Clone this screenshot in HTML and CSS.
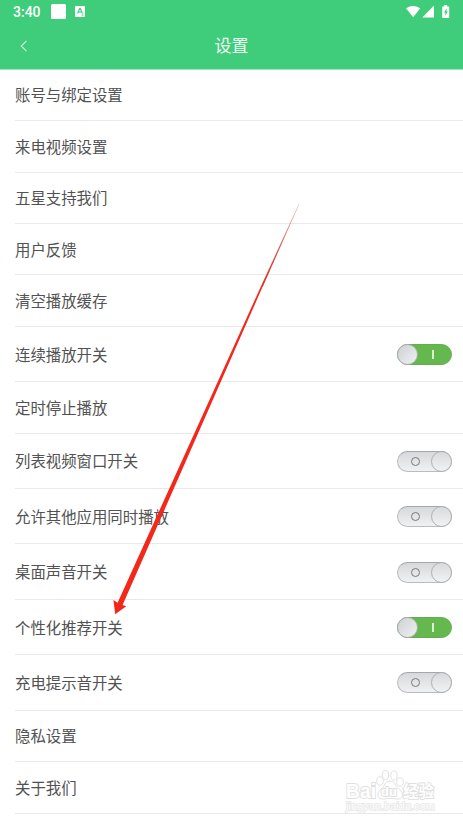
FILE: index.html
```html
<!DOCTYPE html>
<html lang="zh-CN">
<head>
<meta charset="utf-8">
<title>设置</title>
<link rel="stylesheet" href="styles.css">
</head>
<body>
<header class="header">
  <div class="status">
    <span class="time">3:40</span>
    <span class="square"></span>
    <svg class="keyboard" width="10" height="11" viewBox="0 0 10 11"><rect width="10" height="11" rx="1" fill="#fff"/><path d="M2.5 7.5 4.7 2.5h.6l2.2 5M3.3 6h3.4M6.5 9h2" fill="none" stroke="#3fcc7b" stroke-width="1.1"/></svg>
    <svg class="signals" width="44" height="14" viewBox="0 0 44 14"><path d="M0 3.2Q7-1.2 14.3 3.2L7.2 12.2ZM28 .6v11.9H16.3ZM36.2 1.4h2V0h3v1.4h2V13h-7Z" fill="#fff"/><path d="M40.7 3.2 38 7.4h1.4v3.4l2.4-4.3h-1.4Z" fill="#3fcc7b"/></svg>
  </div>
  <div class="bar">
    <svg class="back" width="8" height="12" viewBox="0 0 8 12"><path d="M6.5.8 1.2 6l5.3 5.2" fill="none" stroke="#c9f4d9" stroke-width="1.1"/></svg>
    <h1 class="title">设置</h1>
  </div>
</header>
<main class="list">
  <div class="row">账号与绑定设置</div>
  <div class="row">来电视频设置</div>
  <div class="row">五星支持我们</div>
  <div class="row">用户反馈</div>
  <div class="row">清空播放缓存</div>
  <div class="row tall">连续播放开关<span class="switch on"><i class="mark"></i><i class="knob"></i></span></div>
  <div class="row">定时停止播放</div>
  <div class="row tall">列表视频窗口开关<span class="switch"><i class="mark"></i><i class="knob"></i></span></div>
  <div class="row tall">允许其他应用同时播放<span class="switch"><i class="mark"></i><i class="knob"></i></span></div>
  <div class="row tall">桌面声音开关<span class="switch"><i class="mark"></i><i class="knob"></i></span></div>
  <div class="row tall">个性化推荐开关<span class="switch on"><i class="mark"></i><i class="knob"></i></span></div>
  <div class="row tall">充电提示音开关<span class="switch"><i class="mark"></i><i class="knob"></i></span></div>
  <div class="row">隐私设置</div>
  <div class="row">关于我们</div>
</main>
<svg class="arrow" width="463" height="824" viewBox="0 0 463 824">
  <defs><linearGradient id="fade" gradientUnits="userSpaceOnUse" x1="299" y1="204" x2="262" y2="286"><stop offset="0" stop-color="#e0a0a0" stop-opacity=".8"/><stop offset=".5" stop-color="#d65b50"/><stop offset="1" stop-color="#d9301f"/></linearGradient></defs>
  <path d="M298.8 204 299.2 204.2 262.9 286.6 261.1 286Z" fill="url(#fade)"/>
  <path d="M262.9 286 122.6 605 126.3 606.2 115.2 614.2 113.4 600 117.6 602.7 261.1 286Z" fill="#f3281a"/>
</svg>
<svg class="watermark" width="100" height="50" viewBox="0 0 100 50">
  <g fill="#fff" stroke="#e2e2e2" stroke-width="1">
    <ellipse cx="40" cy="14" rx="3.3" ry="4.2"/>
    <ellipse cx="45.5" cy="8" rx="3.2" ry="4.6"/>
    <ellipse cx="54" cy="8.5" rx="3.2" ry="4.6"/>
    <ellipse cx="60" cy="15" rx="3.3" ry="4.2"/>
    <path d="M50 14c-5 0-5 5-9 8-6 5-3 11 3 10 4-.8 8-.8 12 0 7 1 9-5 3-10-4-3-4-8-9-8Z"/>
  </g>
  <g class="wm-text">
    <text class="wm-brand" x="6" y="31" textLength="30" lengthAdjust="spacingAndGlyphs">Bai</text>
    <text class="wm-du" x="41" y="29">du</text>
    <text class="wm-cn" x="63" y="30" textLength="31" lengthAdjust="spacingAndGlyphs">经验</text>
    <text class="wm-url" x="6" y="43" textLength="89" lengthAdjust="spacingAndGlyphs">jingyan.baidu.com</text>
  </g>
</svg>
</body>
</html>
```

FILE: styles.css
```css
* { box-sizing: border-box; }
body {
  margin: 0;
  position: relative;
  height: 824px;
  overflow: hidden;
  background: #fff;
  color: #525252;
  font-family: "Noto Sans CJK SC", sans-serif;
}
.header {
  height: 69.7px;
  background: #3fcc7b;
  border-bottom: 1px solid #9ee8bd;
  color: #fff;
}
.status {
  display: flex;
  align-items: center;
  height: 23px;
  padding: 0 13px;
}
.time {
  width: 38px;
  font: 500 14px/24px Roboto, sans-serif;
}
.square {
  width: 15px;
  height: 15px;
  border-radius: 1.5px;
  background: #fff;
}
.keyboard { margin-left: 9px; }
.signals { margin-left: auto; }
.bar {
  display: grid;
  grid-template-columns: 48px 1fr 48px;
  align-items: center;
  height: 46px;
}
.back { margin-left: 20px; }
.title {
  margin: 0;
  padding-bottom: 2px;
  color: #effcf4;
  font-size: 17px;
  line-height: 24px;
  font-weight: 400;
  text-align: center;
}
.row {
  display: flex;
  align-items: center;
  justify-content: space-between;
  height: 51.45px;
  margin-left: 15px;
  padding: 0 11px 1px 0;
  border-bottom: 1px solid #e9e9e9;
  font-size: 15.4px;
  line-height: 22px;
}
.tall { height: 55.4px; }
.switch {
  position: relative;
  top: 1px;
  display: flex;
  align-items: center;
  width: 55px;
  height: 21px;
  border: 1px solid #b9bbbe;
  border-top-color: #a4a7ab;
  border-radius: 11px;
  background: linear-gradient(#d6d8db, #f0f1f2);
}
.knob {
  position: absolute;
  top: -1px;
  right: -1px;
  width: 21px;
  height: 21px;
  border: 1px solid #adafb2;
  border-radius: 50%;
  background: linear-gradient(#d8dadd, #f1f2f3);
}
.mark {
  width: 9px;
  height: 9px;
  margin-left: 13px;
  border: 1.6px solid #777a7d;
  border-radius: 50%;
}
.on {
  border-color: #68a957;
  background: #64b84e;
}
.on .knob {
  right: auto;
  left: -1px;
  background: linear-gradient(135deg, #cdd0d5, #f0f1f2);
}
.on .mark {
  width: 1.5px;
  margin-left: 34px;
  border: 0;
  border-radius: 0;
  background: #d8f2d1;
}
.arrow {
  position: absolute;
  top: 0;
  left: 0;
}
.watermark {
  position: absolute;
  top: 767px;
  left: 340px;
}
.wm-text {
  fill: #fff;
  stroke: #dfdfdf;
  stroke-width: 1.8px;
  paint-order: stroke;
  font-family: "Liberation Sans", "Noto Sans CJK SC", sans-serif;
  font-weight: 700;
}
.wm-brand { font-size: 20px; }
.wm-du { font-size: 13px; }
.wm-cn { font-size: 16px; }
.wm-url {
  font-size: 10px;
  font-weight: 400;
  stroke: #e5e5e5;
  stroke-width: 1.3px;
}
```
